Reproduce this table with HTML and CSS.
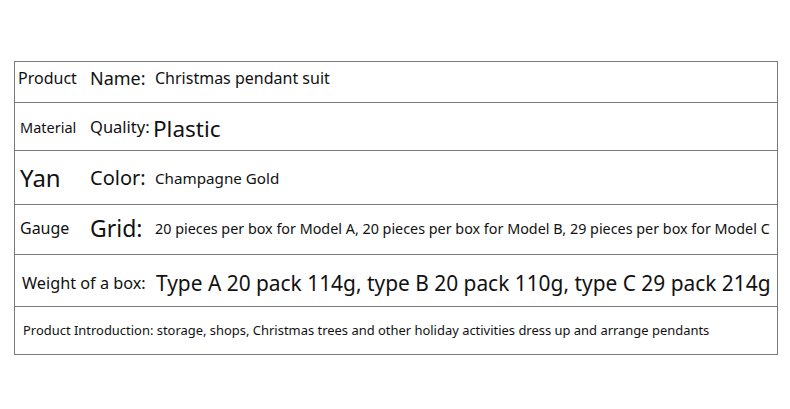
FILE: index.html
```html
<!DOCTYPE html>
<html>
<head>
<meta charset="utf-8">
<link rel="stylesheet" href="styles.css">
</head>
<body>
<div class="sheet">
  <div class="row r1">
    <span class="c1 s16">Product</span>
    <span class="c2 s18">Name:</span>
    <span class="val s16">Christmas pendant suit</span>
  </div>
  <div class="row r2">
    <span class="c1 s145 pad">Material</span>
    <span class="c2 narrow s165">Quality:</span>
    <span class="val s225 low">Plastic</span>
  </div>
  <div class="row r3">
    <span class="c1 s24 pad">Yan</span>
    <span class="c2 s20">Color:</span>
    <span class="val s152">Champagne Gold</span>
  </div>
  <div class="row r4">
    <span class="c1 s16 pad">Gauge</span>
    <span class="c2 s23">Grid:</span>
    <span class="val s1435">20 pieces per box for Model A, 20 pieces per box for Model B, 29 pieces per box for Model C</span>
  </div>
  <div class="row r5">
    <span class="wide s1625">Weight of a box:</span>
    <span class="val s209">Type A 20 pack 114g, type B 20 pack 110g, type C 29 pack 214g</span>
  </div>
  <div class="row r6">
    <span class="intro s1295">Product Introduction: storage, shops, Christmas trees and other holiday activities dress up and arrange pendants</span>
  </div>
</div>
</body>
</html>
```

FILE: styles.css
```css
html, body {
  margin: 0;
  padding: 0;
  background: #ffffff;
}
body {
  font-family: "Noto Sans", "Open Sans", sans-serif;
  color: #111;
}
.sheet {
  margin: 61px 0 0 14px;
  width: 764px;
  box-sizing: border-box;
  border: 1px solid #7a7a7a;
  border-bottom: none;
}
.row {
  display: flex;
  align-items: center;
  box-sizing: border-box;
  border-bottom: 1px solid #7a7a7a;
  white-space: nowrap;
}
.r1 { height: 41px; padding-bottom: 9px; }
.r2 { height: 48px; }
.r3 { height: 54px; }
.r4 { height: 50px; padding-bottom: 3px; }
.r5 { height: 52px; padding-top: 4px; }
.r6 { height: 48px; padding-bottom: 2px; }
.c1 {
  width: 72px;
  padding-left: 3px;
  flex: none;
}
.c1.pad { padding-left: 5px; width: 70px; }
.c2 {
  width: 65px;
  flex: none;
}
.c2.narrow { width: 63px; }
.low { padding-top: 3px; }
.wide {
  width: 134px;
  padding-left: 7px;
  flex: none;
}
.intro {
  padding-left: 8px;
}
.val { flex: none; }
.s1295 { font-size: 12.95px; }
.s1435 { font-size: 14.35px; }
.s145 { font-size: 14.5px; }
.s152 { font-size: 15.2px; }
.s16 { font-size: 16px; }
.s1625 { font-size: 16.25px; }
.s165 { font-size: 16.5px; }
.s18 { font-size: 18px; }
.s20 { font-size: 20px; }
.s209 { font-size: 20.9px; }
.s225 { font-size: 22.5px; }
.s23 { font-size: 23px; }
.s24 { font-size: 24px; }
```
